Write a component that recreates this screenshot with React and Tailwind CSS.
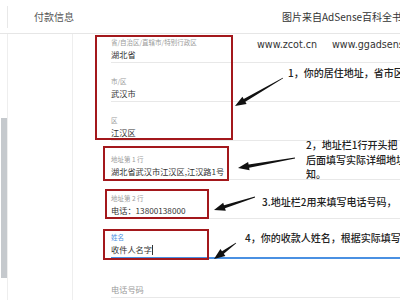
import React from "react";

const fields = [
  { label: "省/自治区/直辖市/特别行政区", value: "湖北省", first: true },
  { label: "市/区", value: "武汉市" },
  { label: "区", value: "江汉区" },
  { label: "地址第 1 行", value: "湖北省武汉市江汉区,江汉路1号" },
  { label: "地址第 2 行", value: "电话：13800138000" },
];

function Field({ label, value, first }) {
  return (
    <div
      className={`${first ? "pt-[4px]" : "pt-[14px]"} border-b border-[#e8e8e8]`}
    >
      <div className="h-[9px] text-[6.5px] leading-[9px] text-[#9a9a9a]">
        {label}
      </div>
      <div className="h-[15px] text-[8.2px] leading-[15px] text-[#333]">
        {value}
      </div>
    </div>
  );
}

function Arrow({ tail, head }) {
  const [tx, ty] = tail;
  const [hx, hy] = head;
  const len = Math.hypot(hx - tx, hy - ty);
  const dx = (hx - tx) / len;
  const dy = (hy - ty) / len;
  const nx = -dy;
  const ny = dx;
  const bx = hx - dx * 11;
  const by = hy - dy * 11;
  const p = (x, y) => `${x.toFixed(1)},${y.toFixed(1)}`;
  const shaft = [
    p(tx + nx * 0.4, ty + ny * 0.4),
    p(bx + nx * 1.6, by + ny * 1.6),
    p(bx + nx * 4.2, by + ny * 4.2),
    p(hx, hy),
    p(bx - nx * 4.2, by - ny * 4.2),
    p(bx - nx * 1.6, by - ny * 1.6),
    p(tx - nx * 0.4, ty - ny * 0.4),
  ].join(" ");
  return <polygon points={shaft} fill="#111" />;
}

export default function App() {
  return (
    <div className="relative w-[400px] h-[300px] overflow-hidden bg-white font-['Noto_Sans_CJK_SC',sans-serif]">
      <div className="flex items-center h-[34px] border-b border-[#e6e6e6]">
        <div className="ml-[7px] w-px h-[22px] bg-[#e8e8e8]" />
        <div className="ml-[26px] text-[10px] text-[#555]">付款信息</div>
      </div>

      <div className="flex h-[266px]">
        <div className="w-[7px] pt-[84px]">
          <div className="ml-px w-[6px] h-[160px] bg-[#c5c9cd]" />
        </div>
        <div className="w-[66px] border-l border-r border-[#eeeeee]" />
        <div className="flex-1 pl-[38px]">
          {fields.map((f) => (
            <Field key={f.label} {...f} />
          ))}
          <div className="pt-[14px] border-b-2 border-[#4a90e2]">
            <div className="h-[9px] text-[6.5px] leading-[9px] text-[#4a90e2]">
              姓名
            </div>
            <div className="h-[15px] flex items-center text-[8.2px] text-[#333]">
              收件人名字
              <span className="inline-block w-px h-[10px] bg-[#333]" />
            </div>
          </div>
          <div className="pt-[23px] border-b border-[#e8e8e8]">
            <div className="h-[15px] text-[8.2px] leading-[15px] text-[#9a9a9a]">
              电话号码
            </div>
          </div>
        </div>
      </div>

      {/* annotations */}
      <div className="absolute left-[95px] top-[35px] w-[138px] h-[105px] border-2 border-[#a3181c]" />
      <div className="absolute left-[103px] top-[146px] w-[126px] h-[35px] border-2 border-[#a3181c]" />
      <div className="absolute left-[105px] top-[189px] w-[104px] h-[30px] border-2 border-[#a3181c]" />
      <div className="absolute left-[103px] top-[229px] w-[106px] h-[31px] border-2 border-[#a3181c]" />

      <div className="absolute left-[282px] top-[10px] whitespace-nowrap text-[10px] leading-[14px] text-[#333]">
        图片来自AdSense百科全书
      </div>
      <div className="absolute left-[257px] top-[38px] whitespace-nowrap font-['DejaVu_Sans',sans-serif] text-[9.6px] leading-[14px] text-[#333]">
        www.zcot.cn
      </div>
      <div className="absolute left-[332px] top-[38px] whitespace-nowrap font-['DejaVu_Sans',sans-serif] text-[9.6px] leading-[14px] text-[#333]">
        www.ggadsense.cn
      </div>

      <div className="absolute left-[288px] top-[66px] whitespace-nowrap text-[10px] leading-[14px] font-medium text-[#222]">
        1，你的居住地址，省市区
      </div>
      <div className="absolute left-[306px] top-[138px] whitespace-nowrap text-[10px] leading-[14.5px] font-medium text-[#222]">
        <div>2，地址栏1行开头把</div>
        <div>后面填写实际详细地址</div>
        <div>知。</div>
      </div>
      <div className="absolute left-[262px] top-[195px] whitespace-nowrap text-[10px] leading-[14px] font-medium text-[#222]">
        3.地址栏2用来填写电话号码，
      </div>
      <div className="absolute left-[245px] top-[231px] whitespace-nowrap text-[10px] leading-[14px] font-medium text-[#222]">
        4，你的收款人姓名，根据实际填写
      </div>

      <svg
        className="absolute inset-0 pointer-events-none"
        width="400"
        height="300"
        viewBox="0 0 400 300"
      >
        <Arrow tail={[283, 78]} head={[235, 106]} />
        <Arrow tail={[295, 158]} head={[238, 168]} />
        <Arrow tail={[255, 197]} head={[214, 210]} />
        <Arrow tail={[236, 243]} head={[214, 259]} />
      </svg>
    </div>
  );
}
